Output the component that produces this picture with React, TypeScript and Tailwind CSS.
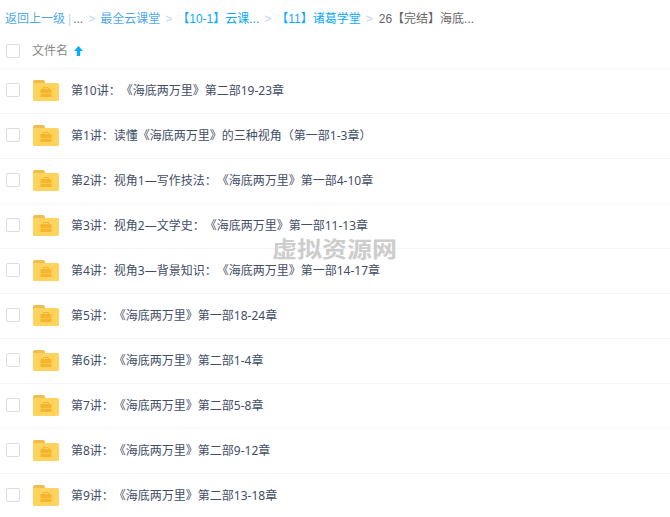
import React from "react";

const FILES = [
  "第10讲：《海底两万里》第二部19-23章",
  "第1讲：读懂《海底两万里》的三种视角（第一部1-3章）",
  "第2讲：视角1—写作技法：《海底两万里》第一部4-10章",
  "第3讲：视角2—文学史：《海底两万里》第一部11-13章",
  "第4讲：视角3—背景知识：《海底两万里》第一部14-17章",
  "第5讲：《海底两万里》第一部18-24章",
  "第6讲：《海底两万里》第二部1-4章",
  "第7讲：《海底两万里》第二部5-8章",
  "第8讲：《海底两万里》第二部9-12章",
  "第9讲：《海底两万里》第二部13-18章",
];

function Checkbox() {
  return <div className="w-[14px] h-[14px] rounded-[2px] border border-[#d8dde6] bg-white shrink-0" />;
}

function FolderIcon() {
  return (
    <svg width="26" height="21" viewBox="0 0 26 21" className="block shrink-0">
      <path d="M0 2a2 2 0 0 1 2-2h8a2 2 0 0 1 2 2v2H0z" fill="#f0be4e" />
      <rect x="0" y="3" width="26" height="18" rx="1.5" fill="#ffd35c" />
      {/* briefcase */}
      <path d="M10 9V8a1 1 0 0 1 1-1h4a1 1 0 0 1 1 1v1h-1V8h-4v1z" fill="#f6b52f" />
      <path d="M7.5 9.5a.5.5 0 0 1 .5-.5h10a.5.5 0 0 1 .5.5V13h-11zM7.5 13.6h11V17h-11z" fill="#f6b52f" />
    </svg>
  );
}

function Sep() {
  return <span className="text-[#c5d5ea] mx-[5px]">&gt;</span>;
}

export default function App() {
  return (
    <div className="relative w-[670px] h-[517px] overflow-hidden bg-white font-['Noto_Sans','Noto_Sans_CJK_SC',sans-serif] text-xs [text-spacing-trim:space-all]">
      {/* Breadcrumb */}
      <div className="h-[38px] pl-[5px] flex items-center whitespace-nowrap text-[#09aaff] font-['Liberation_Sans','Noto_Sans_CJK_SC',sans-serif]">
        <span className="text-[#4da9ea]">返回上一级</span>
        <span className="text-[#c5d5ea] ml-[3px] mr-[2px]">|</span>
        <span className="text-[#666]">...</span>
        <Sep />
        <span className="text-[#4da9ea]">最全云课堂</span>
        <Sep />
        <span>【10-1】云课...</span>
        <Sep />
        <span>【11】诸葛学堂</span>
        <Sep />
        <span className="ml-[1px] text-[#666]">26【完结】海底...</span>
      </div>

      {/* Header */}
      <div className="h-[31px] pl-[6px] pb-[4px] flex items-center border-b border-[#f1f4fb]">
        <Checkbox />
        <span className="ml-[12px] text-[#888]">文件名</span>
        <svg width="9" height="10" viewBox="0 0 9 10" className="ml-[6px]">
          <path d="M4.5 0 9 5H6.2v5H2.8V5H0z" fill="#09aaff" />
        </svg>
      </div>

      {/* File list */}
      {FILES.map((name) => (
        <div key={name} className="h-[45px] pl-[6px] pb-[2px] flex items-center border-b border-[#f4f5fa]">
          <Checkbox />
          <div className="ml-[13px]">
            <FolderIcon />
          </div>
          <span className="ml-[12px] pt-[2px] text-[#424e67] whitespace-nowrap">{name}</span>
        </div>
      ))}

      {/* Watermark */}
      <div className="absolute left-[272px] top-[235px] text-[25px] leading-[26px] font-bold text-[#c8c8c8] opacity-90 whitespace-nowrap scale-y-[0.88]">
        虚拟资源网
      </div>
    </div>
  );
}
